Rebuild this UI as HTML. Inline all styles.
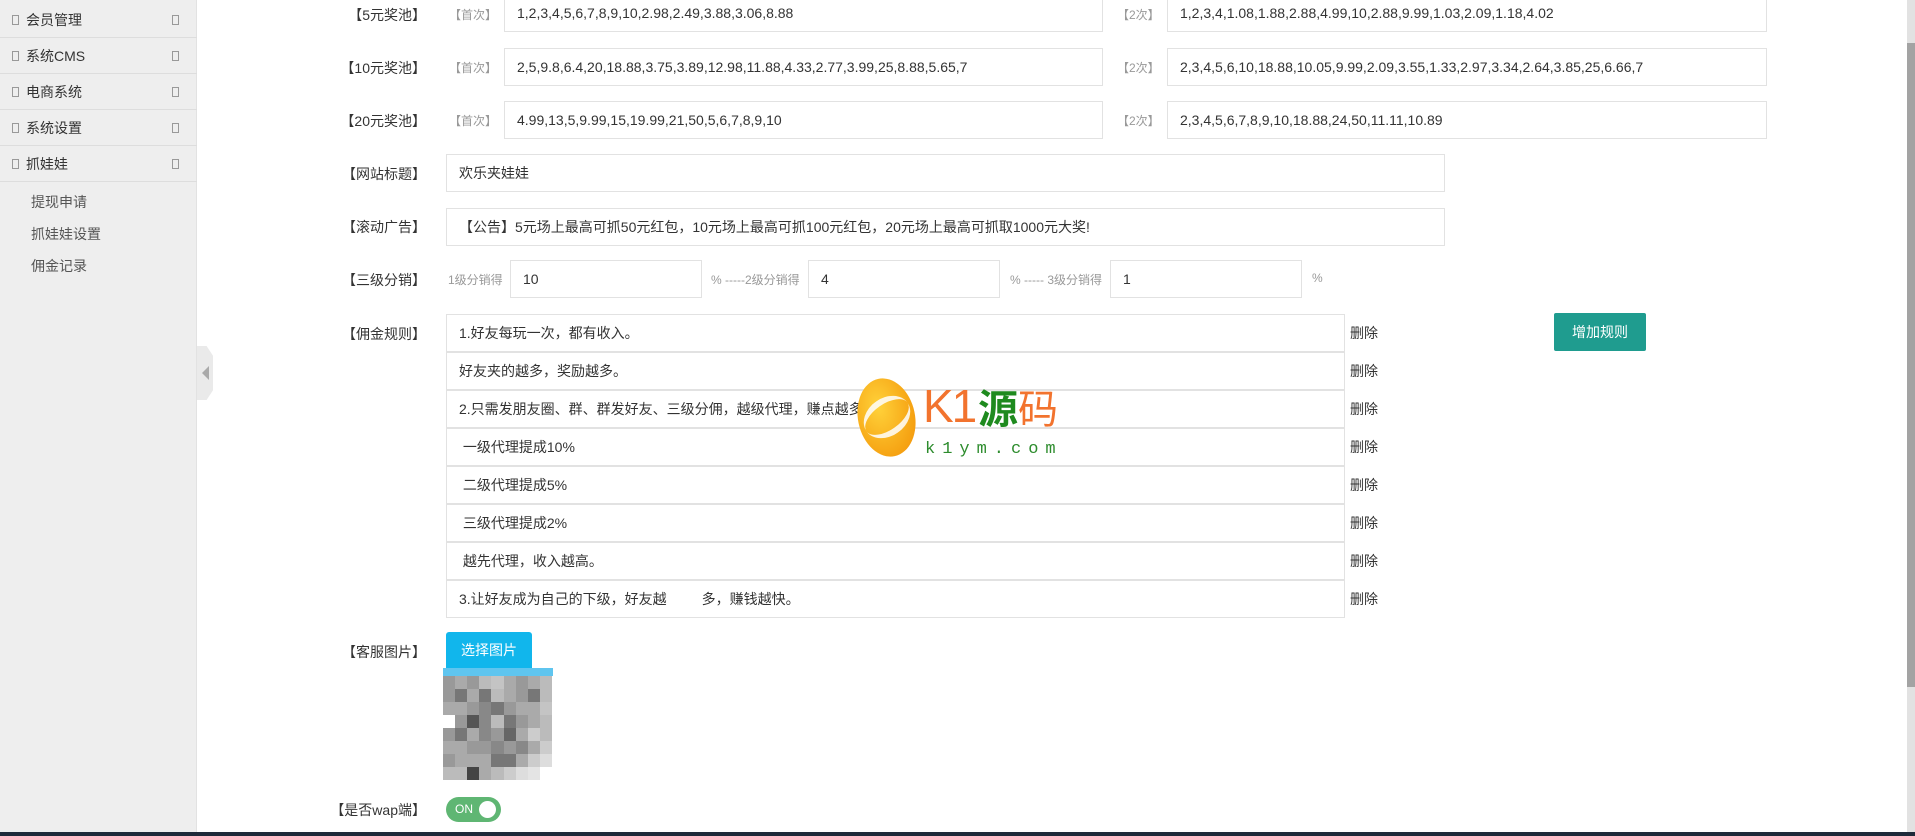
<!DOCTYPE html>
<html><head><meta charset="utf-8"><style>
*{margin:0;padding:0;box-sizing:border-box}
body{width:1915px;height:836px;overflow:hidden;background:#fff;position:relative;font-family:"Liberation Sans","Noto Sans CJK SC",sans-serif;font-size:14px;color:#333}
.a{position:absolute}
.side{left:0;top:0;width:197px;height:832px;background:#eee;border-right:1px solid #e2e2e2}
.mi{position:absolute;left:0;width:197px;height:36px;border-bottom:1px solid #ddd;line-height:36px;font-size:14px;color:#333}
.mi .b{position:absolute;left:12px;top:13px;width:7px;height:10px;border:1px solid #999}
.mi .r{position:absolute;left:172px;top:13px;width:7px;height:10px;border:1px solid #999}
.mi span{position:absolute;left:26px}
.sub{position:absolute;left:31px;font-size:14px;color:#555}
.lab{position:absolute;width:130px;left:296px;text-align:right;font-size:14px;color:#333}
.inp{position:absolute;border:1px solid #e2e2e2;background:#fff;height:38px;line-height:36px;padding-left:12px;font-size:14px;color:#333;white-space:nowrap;overflow:hidden}
.g{position:absolute;font-size:12px;color:#999}
.del{position:absolute;left:1350px;font-size:14px;color:#333}
</style></head><body>
<div class="a side"></div>
<div class="mi" style="top:2px"><i class="b"></i><span>会员管理</span><i class="r"></i></div>
<div class="mi" style="top:38px"><i class="b"></i><span>系统CMS</span><i class="r"></i></div>
<div class="mi" style="top:74px"><i class="b"></i><span>电商系统</span><i class="r"></i></div>
<div class="mi" style="top:110px"><i class="b"></i><span>系统设置</span><i class="r"></i></div>
<div class="mi" style="top:146px"><i class="b"></i><span>抓娃娃</span><i class="r"></i></div>
<div class="sub" style="top:192px">提现申请</div>
<div class="sub" style="top:224px">抓娃娃设置</div>
<div class="sub" style="top:256px">佣金记录</div>
<div class="a" style="left:197px;top:346px;width:16px;height:54px;background:#eaeaea;clip-path:polygon(0 0,60% 0,100% 18%,100% 82%,60% 100%,0 100%)"></div>
<div class="a" style="left:202px;top:366px;width:0;height:0;border-top:7px solid transparent;border-bottom:7px solid transparent;border-right:7px solid #aaa"></div>

<div class="lab" style="top:5px">【5元奖池】</div>
<div class="g" style="left:449px;top:6px">【首次】</div>
<div class="inp" style="left:504px;top:-6px;width:599px">1,2,3,4,5,6,7,8,9,10,2.98,2.49,3.88,3.06,8.88</div>
<div class="g" style="left:1117px;top:6px">【2次】</div>
<div class="inp" style="left:1167px;top:-6px;width:600px">1,2,3,4,1.08,1.88,2.88,4.99,10,2.88,9.99,1.03,2.09,1.18,4.02</div>

<div class="lab" style="top:58px">【10元奖池】</div>
<div class="g" style="left:449px;top:59px">【首次】</div>
<div class="inp" style="left:504px;top:48px;width:599px">2,5,9.8,6.4,20,18.88,3.75,3.89,12.98,11.88,4.33,2.77,3.99,25,8.88,5.65,7</div>
<div class="g" style="left:1117px;top:59px">【2次】</div>
<div class="inp" style="left:1167px;top:48px;width:600px">2,3,4,5,6,10,18.88,10.05,9.99,2.09,3.55,1.33,2.97,3.34,2.64,3.85,25,6.66,7</div>

<div class="lab" style="top:111px">【20元奖池】</div>
<div class="g" style="left:449px;top:112px">【首次】</div>
<div class="inp" style="left:504px;top:101px;width:599px">4.99,13,5,9.99,15,19.99,21,50,5,6,7,8,9,10</div>
<div class="g" style="left:1117px;top:112px">【2次】</div>
<div class="inp" style="left:1167px;top:101px;width:600px">2,3,4,5,6,7,8,9,10,18.88,24,50,11.11,10.89</div>

<div class="lab" style="top:164px">【网站标题】</div>
<div class="inp" style="left:446px;top:154px;width:999px">欢乐夹娃娃</div>
<div class="lab" style="top:217px">【滚动广告】</div>
<div class="inp" style="left:446px;top:208px;width:999px">【公告】5元场上最高可抓50元红包，10元场上最高可抓100元红包，20元场上最高可抓取1000元大奖!</div>

<div class="lab" style="top:270px">【三级分销】</div>
<div class="g" style="left:448px;top:271px">1级分销得</div>
<div class="inp" style="left:510px;top:260px;width:192px">10</div>
<div class="g" style="left:711px;top:271px">% -----2级分销得</div>
<div class="inp" style="left:808px;top:260px;width:192px">4</div>
<div class="g" style="left:1010px;top:271px">% ----- 3级分销得</div>
<div class="inp" style="left:1110px;top:260px;width:192px">1</div>
<div class="g" style="left:1312px;top:271px">%</div>

<div class="lab" style="top:324px">【佣金规则】</div>
<div class="inp" style="left:446px;top:314px;width:899px">1.好友每玩一次，都有收入。</div>
<div class="inp" style="left:446px;top:352px;width:899px">好友夹的越多，奖励越多。</div>
<div class="inp" style="left:446px;top:390px;width:899px">2.只需发朋友圈、群、群发好友、三级分佣，越级代理，赚点越多</div>
<div class="inp" style="left:446px;top:428px;width:899px">&nbsp;一级代理提成10%</div>
<div class="inp" style="left:446px;top:466px;width:899px">&nbsp;二级代理提成5%</div>
<div class="inp" style="left:446px;top:504px;width:899px">&nbsp;三级代理提成2%</div>
<div class="inp" style="left:446px;top:542px;width:899px">&nbsp;越先代理，收入越高。</div>
<div class="inp" style="left:446px;top:580px;width:899px">3.让好友成为自己的下级，好友越&nbsp;&nbsp;&nbsp;&nbsp;&nbsp;&nbsp;&nbsp;&nbsp;&nbsp;多，赚钱越快。</div>
<div class="del" style="top:323px">删除</div><div class="del" style="top:361px">删除</div><div class="del" style="top:399px">删除</div><div class="del" style="top:437px">删除</div><div class="del" style="top:475px">删除</div><div class="del" style="top:513px">删除</div><div class="del" style="top:551px">删除</div><div class="del" style="top:589px">删除</div>
<div class="a" style="left:1554px;top:313px;width:92px;height:38px;background:#1f9c8f;border-radius:2px;color:#fff;text-align:center;line-height:38px;font-size:14px">增加规则</div>

<div class="lab" style="top:642px">【客服图片】</div>
<div class="a" style="left:446px;top:632px;width:86px;height:37px;background:#11b6ec;border-radius:3px 3px 0 0;color:#fff;text-align:center;line-height:37px;font-size:14px">选择图片</div>
<div class="a" style="left:443px;top:668px;width:110px;height:8px;background:#5fc5ef"></div>
<div class="a" style="left:443px;top:676px;width:109px;height:104px;display:grid;grid-template-columns:repeat(9,1fr);grid-template-rows:repeat(8,1fr)">
<i style="background:#999"></i><i style="background:#aaa"></i><i style="background:#999"></i><i style="background:#bbb"></i><i style="background:#c4c4c4"></i><i style="background:#aaa"></i><i style="background:#999"></i><i style="background:#aaa"></i><i style="background:#bbb"></i>
<i style="background:#999"></i><i style="background:#777"></i><i style="background:#aaa"></i><i style="background:#777"></i><i style="background:#bbb"></i><i style="background:#aaa"></i><i style="background:#999"></i><i style="background:#777"></i><i style="background:#bbb"></i>
<i style="background:#aaa"></i><i style="background:#aaa"></i><i style="background:#999"></i><i style="background:#888"></i><i style="background:#777"></i><i style="background:#999"></i><i style="background:#aaa"></i><i style="background:#aaa"></i><i style="background:#c4c4c4"></i>
<i style="background:#fff"></i><i style="background:#999"></i><i style="background:#555"></i><i style="background:#888"></i><i style="background:#bbb"></i><i style="background:#777"></i><i style="background:#999"></i><i style="background:#aaa"></i><i style="background:#bbb"></i>
<i style="background:#999"></i><i style="background:#777"></i><i style="background:#aaa"></i><i style="background:#888"></i><i style="background:#999"></i><i style="background:#666"></i><i style="background:#aaa"></i><i style="background:#ccc"></i><i style="background:#bbb"></i>
<i style="background:#aaa"></i><i style="background:#aaa"></i><i style="background:#999"></i><i style="background:#999"></i><i style="background:#888"></i><i style="background:#999"></i><i style="background:#888"></i><i style="background:#aaa"></i><i style="background:#ccc"></i>
<i style="background:#999"></i><i style="background:#aaa"></i><i style="background:#aaa"></i><i style="background:#aaa"></i><i style="background:#777"></i><i style="background:#777"></i><i style="background:#aaa"></i><i style="background:#ccc"></i><i style="background:#ddd"></i>
<i style="background:#bbb"></i><i style="background:#bbb"></i><i style="background:#444"></i><i style="background:#aaa"></i><i style="background:#bbb"></i><i style="background:#ccc"></i><i style="background:#ddd"></i><i style="background:#e4e4e4"></i><i style="background:#fff"></i>
</div>

<div class="lab" style="top:800px">【是否wap端】</div>
<div class="a" style="left:446px;top:797px;width:55px;height:25px;background:#5fb673;border-radius:13px;color:#fff;font-size:12px;line-height:25px;padding-left:9px">ON</div>
<div class="a" style="left:479px;top:801px;width:17px;height:17px;background:#fff;border-radius:50%"></div>

<!-- watermark -->
<div class="a" style="left:858px;top:378px;width:57px;height:79px;border-radius:50%;background:radial-gradient(ellipse at 40% 35%,#ffd23a,#f6a313 70%,#ef8a10);transform:rotate(-12deg)"></div>
<div class="a" style="left:862px;top:398px;width:50px;height:38px;border-top:6px solid #fff;border-bottom:6px solid #fff;border-radius:50%;transform:rotate(-35deg);opacity:.85"></div>
<div class="a" style="left:923px;top:378px;font-size:46px;line-height:56px;color:#f2732e;font-family:'Liberation Sans',sans-serif;letter-spacing:-2px">K1</div>
<div class="a" style="left:978px;top:382px;font-size:40px;line-height:48px;color:#1e8a1e;font-weight:bold;font-family:'Noto Sans CJK SC',sans-serif">源<span style="color:#f2732e;font-weight:normal">码</span></div>
<div class="a" style="left:925px;top:440px;font-size:17px;color:#2d8c2d;letter-spacing:7px;font-family:'Liberation Mono',monospace">k1ym.com</div>

<div class="a" style="left:1907px;top:0;width:8px;height:832px;background:#e2e2e2"></div>
<div class="a" style="left:1907px;top:43px;width:8px;height:644px;background:#a3a3a3"></div>
<div class="a" style="left:0;top:832px;width:1915px;height:4px;background:#1e2a3a"></div>
</body></html>
